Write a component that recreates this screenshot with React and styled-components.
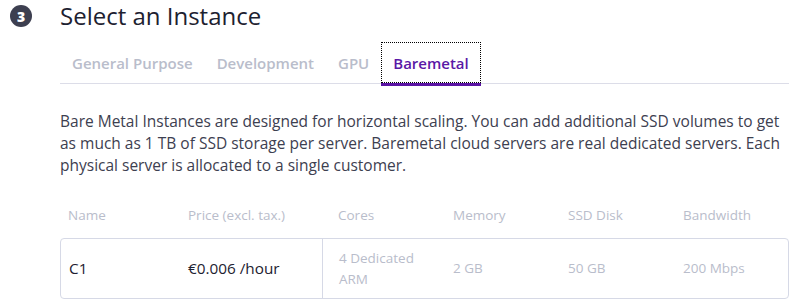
import React, { useState } from "react";
import styled, { createGlobalStyle } from "styled-components";

const GlobalStyle = createGlobalStyle`
  body {
    margin: 0;
    background: #fff;
    font-family: "Open Sans", Lato, sans-serif;
    color: #1d2130;
  }
`;

const tabs = ["General Purpose", "Development", "GPU", "Baremetal"];

const columns = ["Name", "Price (excl. tax.)", "Cores", "Memory", "SSD Disk", "Bandwidth"];

export default function App() {
  const [active, setActive] = useState(3);
  return (
    <>
      <GlobalStyle />
      <Section>
        <Header>
          <StepBadge>3</StepBadge>
          <Title>Select an Instance</Title>
        </Header>
        <Body>
          <TabList>
            {tabs.map((t, i) => (
              <Tab key={t} $active={i === active} onClick={() => setActive(i)}>
                {t}
              </Tab>
            ))}
          </TabList>
          <Description>
            Bare Metal Instances are designed for horizontal scaling. You can add
            additional SSD volumes to get as much as 1 TB of SSD storage per
            server. Baremetal cloud servers are real dedicated servers. Each
            physical server is allocated to a single customer.
          </Description>
          <HeadRow>
            {columns.map((c, i) => (
              <HeadCell key={c} $inset={i === 2}>
                {c}
              </HeadCell>
            ))}
          </HeadRow>
          <Card>
            <Cell $strong>C1</Cell>
            <Cell $strong>€0.006 /hour</Cell>
            <Cell $divider $inset>
              4 Dedicated
              <br />
              ARM
            </Cell>
            <Cell>2 GB</Cell>
            <Cell>50 GB</Cell>
            <Cell>200 Mbps</Cell>
          </Card>
        </Body>
      </Section>
    </>
  );
}

const Section = styled.section`
  padding: 0 8px 0 10px;
`;

const Header = styled.div`
  display: flex;
  align-items: center;
  gap: 28px;
  height: 32px;
`;

const StepBadge = styled.span`
  width: 22px;
  height: 22px;
  border-radius: 50%;
  background: #3d3f50;
  color: #fff;
  font-size: 14px;
  font-weight: 800;
  display: flex;
  align-items: center;
  justify-content: center;
`;

const Title = styled.h2`
  margin: 0;
  font-size: 24px;
  line-height: 32px;
  font-weight: 400;
  color: #1d2130;
`;

const Body = styled.div`
  margin-left: 50px;
  width: 729px;
`;

const TabList = styled.div`
  display: flex;
  margin-top: 10px;
  border-bottom: 1px solid #dcdde8;
`;

const Tab = styled.button`
  height: 41px;
  padding: 0 11px;
  background: none;
  font-family: inherit;
  font-size: 15px;
  font-weight: 600;
  color: ${(p) => (p.$active ? "#5a18a6" : "#b9bdcb")};
  border: 1px ${(p) => (p.$active ? "dotted #000" : "solid transparent")};
  box-shadow: ${(p) => (p.$active ? "0 3px 0 #5a13a3" : "none")};
  cursor: pointer;
`;

const Description = styled.p`
  margin: 26px 0 0;
  font-size: 15.5px;
  line-height: 22px;
  color: #3d4050;
  max-width: 725px;
`;

const grid = `
  display: grid;
  grid-template-columns: 120px 141px 124px 115px 115px 1fr;
`;

const HeadRow = styled.div`
  ${grid}
  margin-top: 29px;
`;

const HeadCell = styled.div`
  padding: 0 8px;
  padding-left: ${(p) => (p.$inset ? "17px" : "8px")};
  font-size: 13.5px;
  line-height: 20px;
  color: #b9bdcb;
`;

const Card = styled.div`
  ${grid}
  margin-top: 13px;
  box-sizing: border-box;
  height: 61px;
  border: 1px solid #d6d9e6;
  border-radius: 4px;
`;

const Cell = styled.div`
  display: flex;
  align-items: center;
  padding: 0 7px;
  padding-left: ${(p) => (p.$inset ? "16px" : "7px")};
  font-size: ${(p) => (p.$strong ? "15.3px" : "13.5px")};
  font-weight: ${(p) => (p.$strong ? 500 : 400)};
  line-height: 21px;
  color: ${(p) => (p.$strong ? "#1d2130" : "#b9bdcb")};
  border-left: ${(p) => (p.$divider ? "1px solid #d6d9e6" : "none")};
  &:first-child {
    padding-left: 8px;
  }
`;
